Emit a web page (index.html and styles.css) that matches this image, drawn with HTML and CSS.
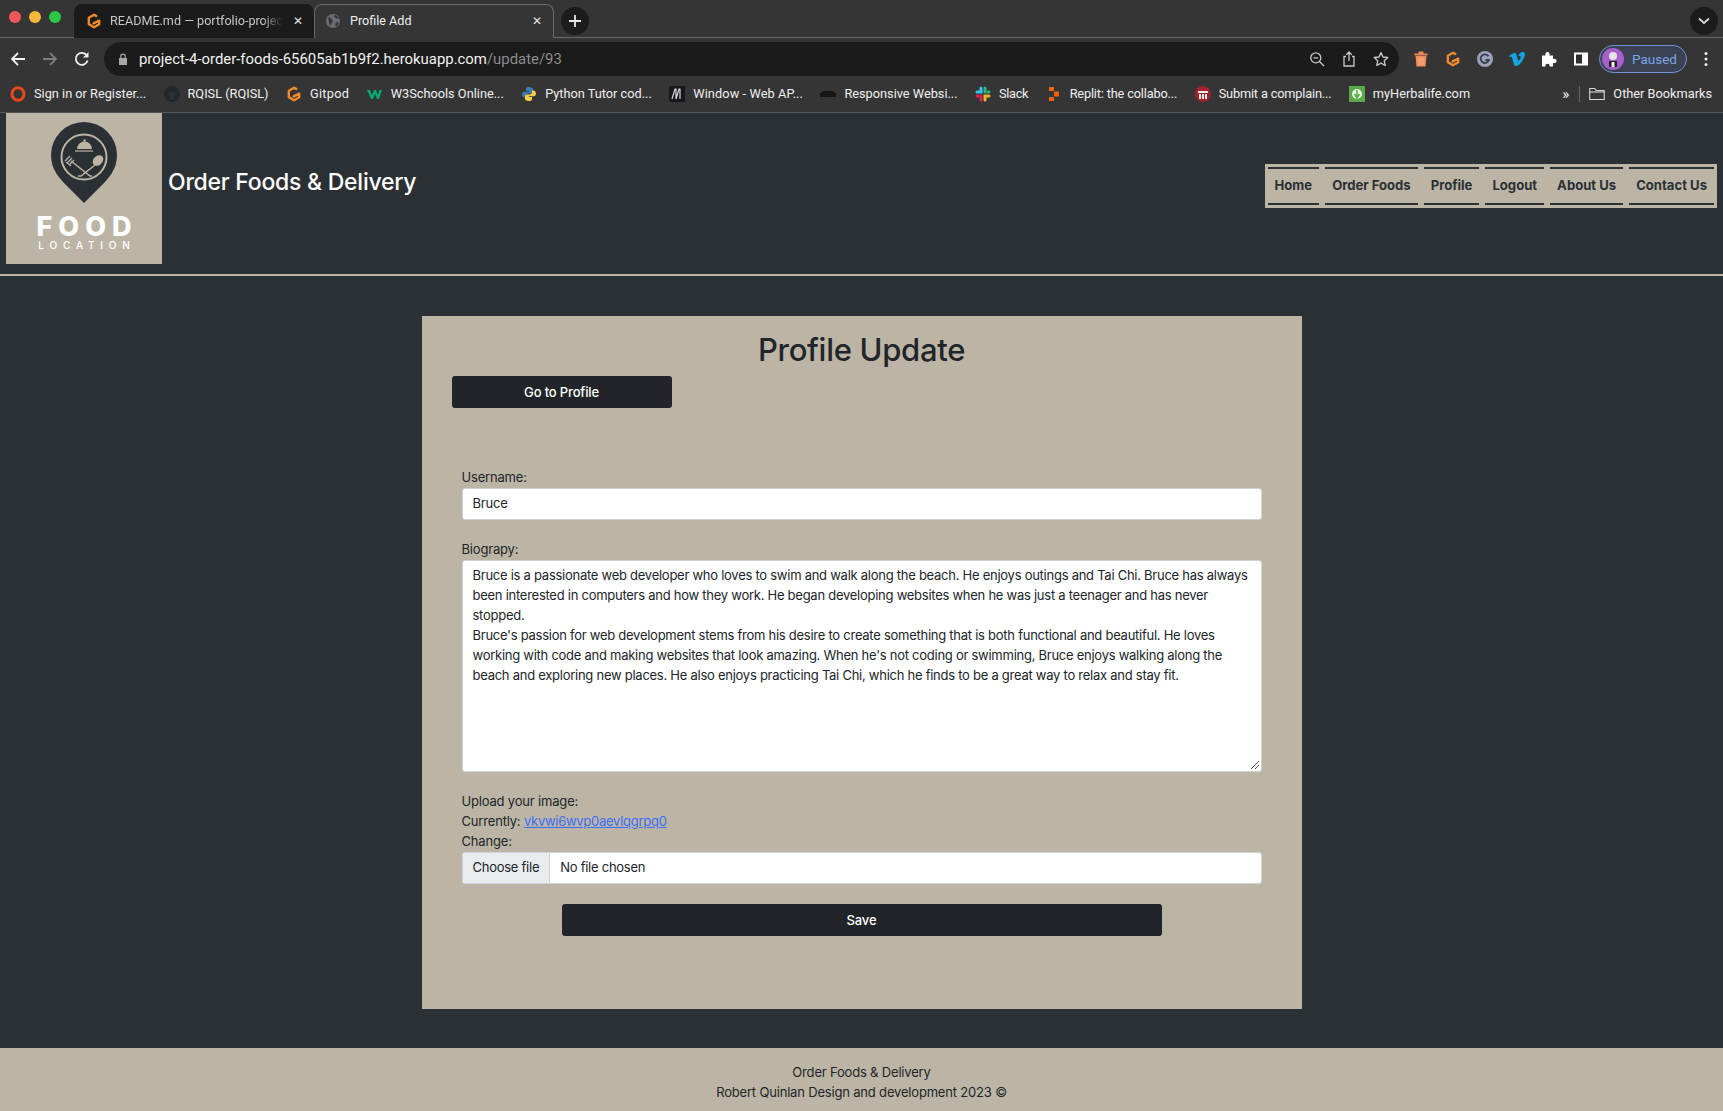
FILE: index.html
```html
<!DOCTYPE html>
<html lang="en">
<head>
<meta charset="utf-8">
<title>Profile Add</title>
<link rel="stylesheet" href="styles.css">
</head>
<body>
<div class="chrome">
  <div class="tabstrip">
    <div class="lights"><i class="light red"></i><i class="light yellow"></i><i class="light green"></i></div>
    <div class="tab tab-bg">
      <svg class="ico" viewBox="0 0 16 16"><path d="M10.200 2.900 8 1.700 2.800 4.700v6.400L8 14.200l5.200-3V7.600L7.600 10.400" fill="none" stroke="#f08a2c" stroke-width="2.400" stroke-linejoin="round" stroke-linecap="round"/></svg>
      <span class="tab-title fade">README.md — portfolio-project</span>
      <span class="tab-x">✕</span>
    </div>
    <div class="tab tab-on">
      <svg class="ico" viewBox="0 0 16 16"><circle cx="8" cy="8" r="7" fill="#6a6d72"/><path d="M3 4l4 2 1 3-2 2-1 3M10 1.500 9 4l3 1.500 3 .5M11 9l3 1-2 3.500-2-1z" fill="#35373a"/></svg>
      <span class="tab-title">Profile Add</span>
      <span class="tab-x">✕</span>
    </div>
    <div class="newtab"><svg viewBox="0 0 14 14" width="14" height="14"><path d="M7 1v12M1 7h12" stroke="#e8e8e8" stroke-width="1.800"/></svg></div>
    <div class="tabmenu"><svg viewBox="0 0 12 8" width="12" height="8"><path d="M1 1.500 6 6l5-4.500" fill="none" stroke="#d8d8d8" stroke-width="1.800"/></svg></div>
  </div>
  <div class="toolbar">
    <div class="navs">
      <svg class="nav-ico" viewBox="0 0 16 16"><path d="M15 8H2M8 2 2 8l6 6" fill="none" stroke="#f2f2f2" stroke-width="1.800"/></svg>
      <svg class="nav-ico" viewBox="0 0 16 16"><path d="M1 8h13M8 2l6 6-6 6" fill="none" stroke="#7d7d7d" stroke-width="1.800"/></svg>
      <svg class="nav-ico" viewBox="0 0 16 16"><path d="M13.600 9.500A6 6 0 1 1 12.200 3.700" fill="none" stroke="#f2f2f2" stroke-width="1.800"/><path d="M14.500 1v5.500H9z" fill="#f2f2f2"/></svg>
    </div>
    <div class="omnibox">
      <svg class="lock" viewBox="0 0 10 12"><path d="M1 5h8v7H1z" fill="#a9a9a9"/><path d="M2.800 5V3.300a2.200 2.200 0 0 1 4.400 0V5" fill="none" stroke="#a9a9a9" stroke-width="1.200"/></svg>
      <span class="url">project-4-order-foods-65605ab1b9f2.herokuapp.com<span class="url-path">/update/93</span></span>
      <span class="omni-icons">
        <svg class="tool-ico" viewBox="0 0 16 16"><circle cx="6.800" cy="6.800" r="5" fill="none" stroke="#c8c8c8" stroke-width="1.300"/><path d="M4.500 6.800h4.600M10.500 10.500l4.500 4.500" stroke="#c8c8c8" stroke-width="1.300"/></svg>
        <svg class="tool-ico" viewBox="0 0 16 16"><path d="M5 5.500H3v9.500h10V5.500h-2M8 10V1.500M5.300 3.800 8 1l2.700 2.800" fill="none" stroke="#c8c8c8" stroke-width="1.300"/></svg>
        <svg class="tool-ico" viewBox="0 0 16 16"><path d="m8 1.500 2 4.500 4.800.5-3.600 3.200 1 4.800L8 12.100l-4.200 2.400 1-4.800L1.200 6.500 6 6z" fill="none" stroke="#c8c8c8" stroke-width="1.300" stroke-linejoin="round"/></svg>
      </span>
    </div>
    <div class="extensions">
      <svg class="ext" viewBox="0 0 16 16"><path d="M1.500 2.500h13v2h-13z" fill="#ee8a55"/><path d="M5.500 .5h5v2.500h-5z" fill="#ee8a55"/><path d="M2.500 5h11l-1 10.500h-9z" fill="#f08d58"/><path d="M6 6.500v7.500M8 6.500v7.500M10 6.500v7.500" stroke="#f7b795" stroke-width=".8"/></svg>
      <svg class="ext" viewBox="0 0 16 16"><path d="M10.200 2.900 8 1.700 2.800 4.700v6.400L8 14.200l5.200-3V7.600L7.600 10.400" fill="none" stroke="#f08a2c" stroke-width="2.400" stroke-linejoin="round" stroke-linecap="round"/></svg>
      <svg class="ext" viewBox="0 0 16 16"><circle cx="8" cy="8" r="8" fill="#9ba2bb"/><path d="M11.500 5.300A4.300 4.300 0 1 0 12 9H8.500" fill="none" stroke="#3b3e4a" stroke-width="1.800"/></svg>
      <svg class="ext" viewBox="0 0 16 16"><path d="M0 5l1 1.200c1-.7 1.700-.9 2 .2l1.700 6.300c.5 1.400 1.300 2.300 2.300 2.300 2 0 4-1.800 6.300-5.100C15.500 6.800 16 4.500 15.900 3.100 15.800 1.500 14.900.9 13.600 1c-2 .1-3.600 1.600-4.300 4.300 1.300-.6 2.600-.4 2.400 1.100-.1.900-1.300 3-2.200 3-.8 0-1-1.200-1.400-3.300C7.700 4 7.400 1.600 5.700 1.800 4 2 1.800 3.900 0 5z" fill="#12a4df"/></svg>
      <svg class="ext" viewBox="0 0 16 16"><path d="M1 4.500h3.500C4 2.500 5 1 6.500 1S9 2.500 8.500 4.500H12v3.500c2-.5 3.500.4 3.500 2S14 12.500 12 12v3.500H8.500c.5-1.800-.5-2.800-2-2.800s-2.500 1-2 2.800H1z" fill="#fff"/></svg>
      <svg class="ext" viewBox="0 0 16 16"><path d="M1 1.500h14v13H1z" fill="#fff"/><path d="M3 3.500h6v9H3z" fill="#2f2f2f"/></svg>
    </div>
    <div class="pill">
      <svg class="avatar" viewBox="0 0 22 22"><circle cx="11" cy="11" r="11" fill="#a660c9"/><circle cx="11" cy="8" r="4" fill="#e4e4e4"/><path d="M7 13h8v6H7z" fill="#222"/><path d="M9.500 14h3v5h-3z" fill="#eee"/></svg>
      <span class="pill-text">Paused</span>
    </div>
    <svg class="kebab" viewBox="0 0 4 16"><circle cx="2" cy="2.500" r="1.500" fill="#eee"/><circle cx="2" cy="8" r="1.500" fill="#eee"/><circle cx="2" cy="13.500" r="1.500" fill="#eee"/></svg>
  </div>
  <div class="bookmarks">
    <div class="marks">
      <span class="mark"><svg class="ico" viewBox="0 0 16 16"><ellipse cx="8" cy="8" rx="6" ry="6.300" fill="none" stroke="#e8481c" stroke-width="3"/></svg><span>Sign in or Register...</span></span>
      <span class="mark"><svg class="ico" viewBox="0 0 16 16"><circle cx="8" cy="8" r="8" fill="#22272e"/><path d="M4.500 5 6 6h4l1.500-1v4l-1.500 1.500v3H6v-3L4.500 9z" fill="#2c323a"/></svg><span>RQISL (RQISL)</span></span>
      <span class="mark"><svg class="ico" viewBox="0 0 16 16"><path d="M10.200 2.900 8 1.700 2.800 4.700v6.400L8 14.200l5.200-3V7.600L7.600 10.400" fill="none" stroke="#f08a2c" stroke-width="2.400" stroke-linejoin="round" stroke-linecap="round"/></svg><span class="bm-wide">Gitpod</span></span>
      <span class="mark"><svg class="ico" viewBox="0 0 16 16"><path d="M0 4h3l2 5 2-5h2l2 5 1.500-5H15l-3 9H10L8 8l-2 5H4z" fill="#04a96d"/></svg><span>W3Schools Online...</span></span>
      <span class="mark"><svg class="ico" viewBox="0 0 16 16"><path d="M8 1C5 1 5 2 5 3.500V5h3.300v.8H3.500C2 5.800 1 7 1 8.500S2 11.500 3.500 11.500H5V9.800c0-1.300 1-2.300 2.300-2.300H10c1 0 2-.9 2-2V3c0-1-1.500-2-4-2z" fill="#3f7cb5"/><path d="M8 15c3 0 3-1 3-2.500V11H7.700v-.8h4.800c1.500 0 2.500-1.200 2.500-2.700S14 4.500 12.500 4.500H11v1.700c0 1.300-1 2.300-2.300 2.300H6c-1 0-2 .9-2 2V13c0 1 1.500 2 4 2z" fill="#f7d04a"/></svg><span>Python Tutor cod...</span></span>
      <span class="mark"><svg class="ico" viewBox="0 0 16 16"><path d="M0 0h16v16H0z" fill="#17181b"/><path d="M3 13 6 3h1v10M7 13l3-10h1v10" fill="none" stroke="#d9d9d9" stroke-width="1.200"/></svg><span class="bm-loose">Window - Web AP...</span></span>
      <span class="mark"><svg class="ico" viewBox="0 0 16 16"><path d="M0 7h16v4H0zM2 5h12v2H2z" fill="#151515"/></svg><span>Responsive Websi...</span></span>
      <span class="mark"><svg class="ico" viewBox="0 0 16 16"><path d="M6 2v4H2" fill="none" stroke="#36c5f0" stroke-width="3" stroke-linecap="round"/><path d="M10 2v4M14 6h-1" fill="none" stroke="#2eb67d" stroke-width="3" stroke-linecap="round"/><path d="M10 14v-4h4" fill="none" stroke="#ecb22e" stroke-width="3" stroke-linecap="round"/><path d="M6 14v-4M2 10h1" fill="none" stroke="#e01e5a" stroke-width="3" stroke-linecap="round"/></svg><span class="bm-slim">Slack</span></span>
      <span class="mark"><svg class="ico" viewBox="0 0 16 16"><path d="M3 1h5v4H3zM8 5.500h5v5H8zM3 11h5v4H3z" fill="#f26207"/></svg><span class="bm-tight">Replit: the collabo...</span></span>
      <span class="mark"><svg class="ico" viewBox="0 0 16 16"><circle cx="8" cy="8" r="8" fill="#a0222f"/><path d="M3 5h10v2H3zM4 8h2v5H4zM7 8h2v5H7zM10 8h2v5h-2z" fill="#f1e8e8"/></svg><span class="bm-tight">Submit a complain...</span></span>
      <span class="mark"><svg class="ico" viewBox="0 0 16 16"><path d="M0 0h16v16H0z" fill="#5aa946"/><circle cx="8" cy="8" r="5" fill="#e8f5e2"/><path d="M8 4v8M5.500 8 8 12l2.500-4" fill="none" stroke="#5aa946" stroke-width="1.500"/></svg><span>myHerbalife.com</span></span>
    </div>
    <div class="marks-end">
      <span class="more">»</span>
      <span class="mark-sep"></span>
      <span class="mark"><svg class="ico" viewBox="0 0 16 16"><path d="M.700 13.500V2.500h5l1.500 2h8v9z" fill="none" stroke="#d8d8d8" stroke-width="1.100"/><path d="M.700 6h14.600" stroke="#d8d8d8" stroke-width="1.100"/></svg><span>Other Bookmarks</span></span>
    </div>
  </div>
</div>

<header class="site-head">
  <div class="brand">
    <svg class="logo" viewBox="0 0 156 151">
      <path d="M78 9a33 33 0 0 1 33 33c0 15-9 24-17 32L78 90 62 74c-8-8-17-17-17-32a33 33 0 0 1 33-33z" fill="#2b3035"/>
      <circle cx="78" cy="44" r="22.500" fill="none" stroke="#bcb5a5" stroke-width="2"/>
      <path d="M71 36a7.500 7.500 0 0 1 15 0z" fill="#bcb5a5"/><circle cx="78.500" cy="27.500" r="1.200" fill="#bcb5a5"/>
      <path d="M69 38h18" stroke="#bcb5a5" stroke-width="1.200"/>
      <path d="M65 48 84 63h2" fill="none" stroke="#bcb5a5" stroke-width="1.500"/>
      <path d="M59 48l5-5M61 50l5-5M63 52l5-5M60 49l5 4" stroke="#bcb5a5" stroke-width="1.100"/>
      <path d="M89 52 75 63h-3" fill="none" stroke="#bcb5a5" stroke-width="1.500"/>
      <ellipse cx="92" cy="47.500" rx="6" ry="4.500" transform="rotate(-45 92 47.500)" fill="#bcb5a5"/>
      <text class="logo-food" x="81" y="123" text-anchor="middle">FOOD</text>
      <text class="logo-loc" x="81" y="136" text-anchor="middle">LOCATION</text>
    </svg>
    <span class="site-title">Order Foods &amp; Delivery</span>
  </div>
  <nav class="site-nav">
    <a class="nav-link">Home</a>
    <a class="nav-link">Order Foods</a>
    <a class="nav-link">Profile</a>
    <a class="nav-link">Logout</a>
    <a class="nav-link">About Us</a>
    <a class="nav-link">Contact Us</a>
  </nav>
</header>

<main class="content">
  <section class="card">
    <h1 class="card-title">Profile Update</h1>
    <a class="btn btn-back">Go to Profile</a>
    <form class="form">
      <div class="field">
        <label class="label">Username:</label>
        <div class="control control-input">Bruce</div>
      </div>
      <div class="field">
        <label class="label">Biograpy:</label>
        <div class="control control-area">
          <p>Bruce is a passionate web developer who loves to swim and walk along the beach. He enjoys outings and Tai Chi. Bruce has always been interested in computers and how they work. He began developing websites when he was just a teenager and has never stopped.</p>
          <p>Bruce's passion for web development stems from his desire to create something that is both functional and beautiful. He loves working with code and making websites that look amazing. When he's not coding or swimming, Bruce enjoys walking along the beach and exploring new places. He also enjoys practicing Tai Chi, which he finds to be a great way to relax and stay fit.</p>
          <svg class="grip" viewBox="0 0 8 8"><path d="M0 8 8 0M4 8l4-4" stroke="#555" stroke-width="1"/></svg>
        </div>
      </div>
      <div class="field-file">
        <div class="label">Upload your image:</div>
        <div class="label">Currently: <a class="link">vkvwi6wvp0aevlqgrpq0</a></div>
        <div class="label">Change:</div>
        <div class="control file"><span class="file-btn">Choose file</span><span class="file-name">No file chosen</span></div>
      </div>
      <div class="save-row"><a class="btn btn-save">Save</a></div>
    </form>
  </section>
</main>

<footer class="site-foot">
  <div>Order Foods &amp; Delivery</div>
  <div>Robert Quinlan Design and development 2023 ©</div>
</footer>
</body>
</html>
```

FILE: styles.css
```css
* { box-sizing: border-box; }
html, body { margin: 0; padding: 0; }
body {
  width: 1723px;
  height: 1111px;
  overflow: hidden;
  background: #2b3035;
  font-family: Inter, "Noto Sans", sans-serif;
  font-size: 13px;
  letter-spacing: -.18px;
  line-height: 20px;
  color: #212529;
}

/* browser chrome */
.chrome { background: #353535; color: #f0f0f0; font-family: Roboto, Inter, sans-serif; letter-spacing: 0; }
.tabstrip { height: 38px; display: flex; align-items: flex-end; position: relative; border-bottom: 1px solid #6a6a6a; padding-left: 9px; }
.lights { display: flex; gap: 8px; width: 65px; align-self: flex-start; padding-top: 11px; }
.light { width: 12px; height: 12px; border-radius: 50%; display: block; }
.red { background: #f0555c; }
.yellow { background: #f5b73a; }
.green { background: #2bc845; }
.tab { width: 240px; height: 34px; margin-bottom: -1px; display: flex; align-items: center; gap: 8px; padding: 0 9px 1px 12px; font-size: 12.600px; border-radius: 8px 8px 0 0; }
.tab-bg { background: #1b1b1b; color: #c6c6c6; }
.tab-on { background: #353535; color: #eee; border: 1px solid #6a6a6a; border-bottom: 0; padding-left: 10px; gap: 9px; }
.ico { width: 16px; height: 16px; flex: none; }
.tab-title { flex: 1; white-space: nowrap; overflow: hidden; min-width: 0; }
.fade { -webkit-mask-image: linear-gradient(to right, #000 88%, transparent); mask-image: linear-gradient(to right, #000 88%, transparent); }
.tab-x { font-size: 12px; color: #e4e4e4; width: 14px; text-align: center; }
.newtab { width: 28px; height: 28px; border-radius: 50%; background: #1c1c1c; display: flex; align-items: center; justify-content: center; margin: 0 0 2px 7px; }
.tabmenu { width: 28px; height: 28px; border-radius: 50%; background: #1c1c1c; display: flex; align-items: center; justify-content: center; margin: 0 5px 2px auto; }

.toolbar { height: 38px; display: flex; align-items: center; padding-top: 4px; }
.navs { width: 104px; display: flex; gap: 16px; padding-left: 10px; flex: none; }
.nav-ico { width: 16px; height: 16px; }
.omnibox { width: 1295px; height: 34px; background: #1b1b1b; border-radius: 17px; display: flex; align-items: center; padding: 0 10px 0 14px; flex: none; }
.lock { width: 10px; height: 12px; flex: none; margin-right: 11px; }
.url { font-size: 14.900px; color: #f2f2f2; white-space: nowrap; }
.url-path { color: #8c8c8c; }
.omni-icons { margin-left: auto; display: flex; gap: 16px; }
.tool-ico { width: 16px; height: 16px; }
.extensions { display: flex; gap: 16px; margin-left: 14px; flex: none; }
.ext { width: 16px; height: 16px; }
.pill { width: 88px; height: 28px; margin-left: 10px; border: 1px solid #6d93d6; border-radius: 14px; background: #3b4150; display: flex; align-items: center; gap: 8px; padding-left: 2px; flex: none; }
.avatar { width: 22px; height: 22px; flex: none; }
.pill-text { color: #7ba6e8; font-size: 13.500px; }
.kebab { width: 4px; height: 16px; margin-left: 17px; flex: none; }

.bookmarks { height: 37px; display: flex; align-items: center; justify-content: space-between; border-bottom: 1px solid #555; padding: 0 11px 0 10px; font-size: 12.750px; }
.marks { display: flex; gap: 17.400px; }
.marks-end { display: flex; align-items: center; }
.mark { display: flex; align-items: center; gap: 8px; white-space: nowrap; }
.bm-wide { letter-spacing: .3px; }
.bm-loose { letter-spacing: .1px; }
.bm-slim { letter-spacing: -.3px; }
.bm-tight { letter-spacing: -.16px; }
.more { font-size: 15px; margin-right: 10px; }
.mark-sep { width: 1px; height: 16px; background: #666; margin-right: 9px; }

/* site header */
.site-head { height: 163px; border-bottom: 2px solid #bcb5a5; display: flex; justify-content: space-between; align-items: flex-start; padding: 0 6px; }
.brand { display: flex; align-items: flex-start; gap: 6px; }
.logo { width: 156px; height: 151px; background: #bcb5a5; display: block; flex: none; }
.logo-food { font: 800 27px Inter, sans-serif; letter-spacing: 6px; fill: #fff; }
.logo-loc { font: 500 10px Inter, sans-serif; letter-spacing: 5.800px; fill: #fff; }
.site-title { font-size: 23px; font-weight: 450; line-height: 32px; color: #fff; margin-top: 53px; letter-spacing: -.25px; }
.site-nav { margin-top: 51px; height: 44px; background: #bcb5a5; padding: 3px; display: flex; gap: 6px; }
.nav-link { border-top: 2px solid #2b3035; border-bottom: 2px solid #2b3035; height: 38px; padding: 0 7px 2px; display: flex; align-items: center; font-weight: 700; font-size: 13.100px; letter-spacing: 0; color: #2b3035; }

/* card */
.content { padding-top: 40px; height: 772px; display: flex; justify-content: center; }
.card { width: 880px; height: 693px; background: #bcb5a5; padding: 14px 30px 0; }
.card-title { margin: 0 0 6px; font-size: 31px; line-height: 40px; letter-spacing: -.3px; font-weight: 500; text-align: center; color: #212529; }
.btn { display: flex; align-items: center; justify-content: center; height: 32px; padding-bottom: 1px; background: #212529; color: #fff; font-weight: 500; font-size: 13px; letter-spacing: -.15px; border-radius: 3px; }
.btn-back { width: 220px; }
.form { padding: 60px 10px 0; }
.field { margin-bottom: 20px; }
.label { display: block; height: 20px; line-height: 18px; }
.link { color: #3d6df5; text-decoration: underline; letter-spacing: -.27px; }
.control { background: #fff; border: 1px solid #ced4da; border-radius: 3px; color: #212529; }
.control-input { height: 32px; padding: 4px 10px; }
.control-area { height: 212px; padding: 4px 10px; position: relative; letter-spacing: -.26px; }
.control-area p { margin: 0; }
.grip { position: absolute; right: 2px; bottom: 2px; width: 8px; height: 8px; }
.file { height: 32px; display: flex; overflow: hidden; letter-spacing: -.26px; }
.file-btn { background: #e9ecef; padding: 4px 10px 0; border-right: 1px solid #ced4da; }
.file-name { padding: 4px 10px 0; }
.save-row { display: flex; justify-content: center; margin-top: 20px; }
.btn-save { width: 600px; }

/* footer */
.site-foot { height: 63px; background: #bcb5a5; text-align: center; padding-top: 14px; }
```
